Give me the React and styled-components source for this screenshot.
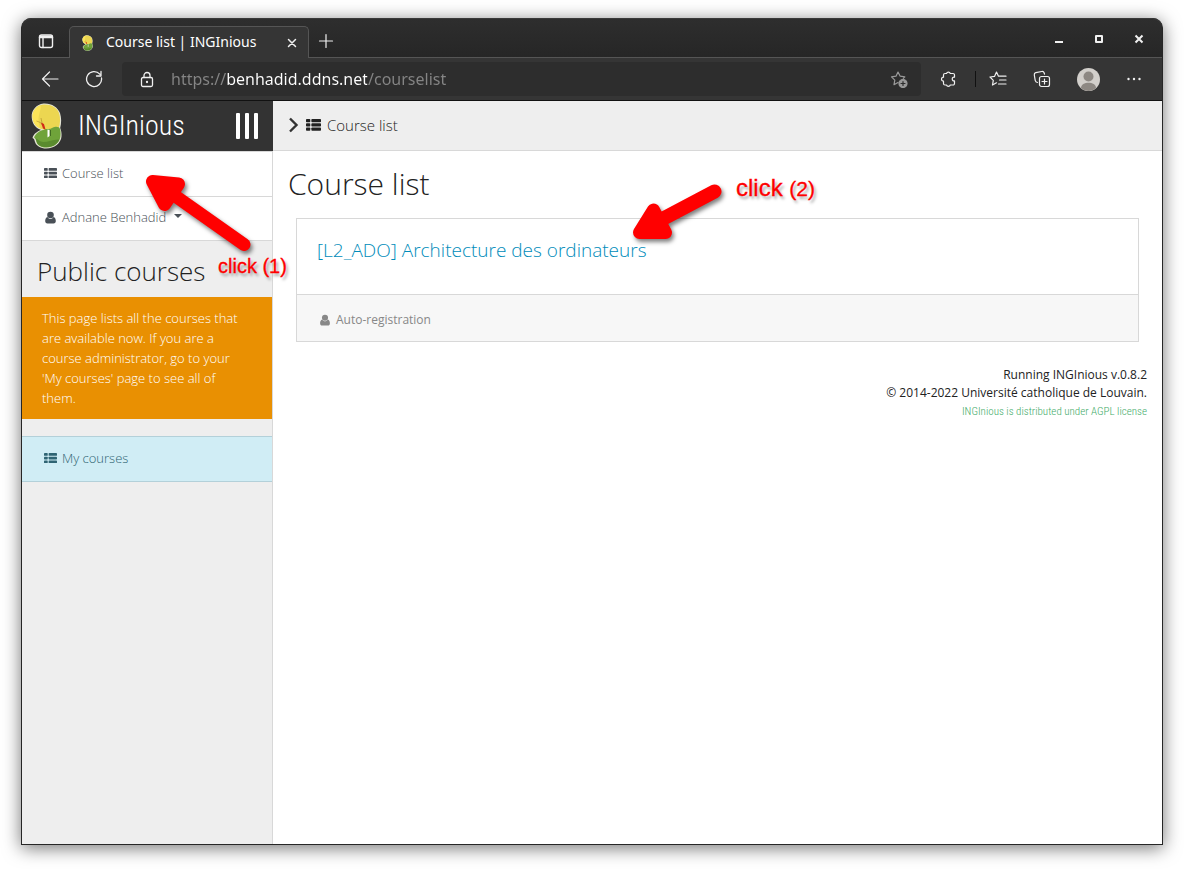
import React from 'react';
import styled, { createGlobalStyle } from 'styled-components';

const GlobalStyle = createGlobalStyle`
  * { box-sizing: border-box; }
  body { margin: 0; background: #fff; font-family: "Open Sans", sans-serif; font-size: 13px; font-weight: 300; color: #222; }
  button, input { font: inherit; color: inherit; border: 0; padding: 0; background: none; }
  a { text-decoration: none; color: inherit; }
  svg { display: block; flex: none; }
`;

const Desktop = styled.div`
  min-height: 100vh;
  padding: 18px 21px 24px;
  display: flex;
`;

const BrowserWindow = styled.div`
  position: relative;
  flex: 1;
  display: flex;
  flex-direction: column;
  border: 1px solid #262626;
  border-top: 0;
  border-radius: 10px 10px 0 0;
  background: #262626;
  box-shadow: 0 3px 18px rgba(0, 0, 0, 0.55);
`;

const TitleBar = styled.div`
  height: 40px;
  display: flex;
  align-items: flex-end;
  border-top: 1px solid #3a3a3a;
  border-bottom: 1px solid #555;
  border-radius: 10px 10px 0 0;
  background: linear-gradient(#2e2e2e, #262626);
  color: #fff;
`;

const BarButton = styled.button`
  width: ${(p) => p.$w || 44}px;
  height: ${(p) => p.$h || 32}px;
  flex: none;
  display: flex;
  align-items: center;
  justify-content: center;
  color: ${(p) => p.$color || '#f0f0f0'};
`;

const Tab = styled.div`
  width: 240px;
  height: 32px;
  margin-bottom: -1px;
  padding: 0 8px 0 11px;
  display: flex;
  align-items: center;
  gap: 12px;
  background: #353535;
  border: 1px solid #555;
  border-bottom: 0;
  border-radius: 5px 5px 0 0;
  font: 400 14px/20px "Noto Sans", sans-serif;
`;

const TabTitle = styled.span`
  flex: 1;
  padding-bottom: 2px;
  white-space: nowrap;
`;

const WindowControls = styled.div`
  margin-left: auto;
  padding-right: 3px;
  display: flex;
`;

const Toolbar = styled.div`
  height: 43px;
  padding: 0 6px;
  display: flex;
  align-items: center;
  background: #353535;
  border-bottom: 1px solid #111;
`;

const AddressBar = styled.div`
  flex: 1;
  height: 34px;
  margin-left: 6px;
  display: flex;
  align-items: center;
  background: #2d2d2d;
  border-radius: 4px;
`;

const Address = styled.input`
  flex: 1;
  min-width: 0;
  height: 24px;
  outline: 0;
  font: 400 16px/24px "Noto Sans", sans-serif;
  background: linear-gradient(90deg, #858585 55px, #fff 55px, #fff 196px, #858585 196px);
  -webkit-background-clip: text;
  background-clip: text;
  -webkit-text-fill-color: transparent;
`;

const Divider = styled.span`
  width: 1px;
  height: 16px;
  background: #111;
`;

const Page = styled.div`
  flex: 1;
  display: flex;
  background: #fff;
`;

const Sidebar = styled.aside`
  width: 251px;
  flex: none;
  background: #eee;
  border-right: 1px solid #d8d8d8;
`;

const Brand = styled.header`
  height: 50px;
  margin-right: -1px;
  padding: 0 15px 0 8px;
  display: flex;
  align-items: center;
  background: #333;
  color: #fff;
  font: 300 28px/50px "Roboto Condensed", "Liberation Sans Narrow", sans-serif;
`;

const BrandLink = styled.a`
  flex: 1;
  display: flex;
  align-items: center;
  gap: 15px;
`;

const NavItem = styled.a`
  height: 45px;
  padding: 0 22px 2px;
  display: flex;
  align-items: center;
  gap: 5px;
  background: #fff;
  color: #495057;
`;

const NavList = styled.nav`
  height: 90px;
  display: flex;
  flex-direction: column;
  border: solid #d8d8d8;
  border-width: 1px 0;

  ${NavItem} + ${NavItem} {
    border-top: 1px solid #d8d8d8;
  }
`;

const Caret = styled.svg`
  margin-left: 2px;
`;

const SideTitle = styled.h2`
  margin: 0;
  padding: 12px 15px 7px;
  font-size: 26px;
  line-height: 37px;
  font-weight: 300;
`;

const Notice = styled.p`
  margin: 0 0 17px;
  padding: 11px 20px;
  line-height: 20px;
  background: #e99002;
  color: #fff;
`;

const CoursesLink = styled(NavItem)`
  height: 46px;
  border: solid #b3d0d9;
  border-width: 1px 0;
  background: #d0edf5;
  color: #2f6473;
`;

const Main = styled.main`
  flex: 1;
  min-width: 0;
`;

const Breadcrumb = styled.nav`
  height: 50px;
  padding: 0 15px 1px;
  display: flex;
  align-items: center;
  gap: 6px;
  background: #eee;
  border-bottom: 1px solid #d8d8d8;
  font-size: 15px;
`;

const Content = styled.div`
  padding: 11px 15px;
`;

const PageTitle = styled.h1`
  margin: 0 0 13px;
  font-size: 30px;
  line-height: 43px;
  font-weight: 300;
`;

const Card = styled.article`
  margin: 0 8px 24px;
  border: 1px solid #d8d8d8;
`;

const CardTitle = styled.h3`
  margin: 0;
  padding: 19px 20px 32px;
  font-size: 19px;
  line-height: 24px;
  font-weight: 300;
  color: #008cba;
`;

const CardFooter = styled.div`
  height: 47px;
  padding: 3px 22px 0;
  display: flex;
  align-items: center;
  gap: 5px;
  border-top: 1px solid #d8d8d8;
  background: #f7f7f7;
  font-size: 12px;
  font-weight: 400;
  color: #888;
`;

const Credits = styled.footer`
  text-align: right;
  font-size: 12px;
  line-height: 18px;
  font-weight: 400;
`;

const License = styled.a`
  display: block;
  color: #43ac6a;
  font: 300 11px/20px "Roboto Condensed", "Liberation Sans Narrow", sans-serif;
`;

const Marks = styled.svg`
  position: absolute;
  left: 0;
  top: 0;
  pointer-events: none;
  filter: drop-shadow(2px 3px 2px rgba(0, 0, 0, 0.5));
`;

const ClickLabel = styled.span`
  position: absolute;
  left: ${(p) => p.$x}px;
  top: ${(p) => p.$y}px;
  font: 400 ${(p) => p.$size}px/28px "Liberation Sans", sans-serif;
  color: #f00;
  -webkit-text-stroke: 0.3px #f00;
  text-shadow: 2px 3px 3px rgba(0, 0, 0, 0.35);
  white-space: nowrap;
`;

const LabelNumber = styled.span`
  font-size: 21px;
`;

const Line = ({ size = 16, w = 1, children, vb = 16 }) => (
  <svg width={size} height={size} viewBox={`0 0 ${vb} ${vb}`} fill="none" stroke="currentColor" strokeWidth={w} strokeLinecap="round" strokeLinejoin="round" aria-hidden="true">
    {children}
  </svg>
);

const ListIcon = ({ width = 13 }) => (
  <svg width={width} height={width * 11 / 14} viewBox="0 0 14 11" fill="currentColor" aria-hidden="true">
    {[0, 4, 8].map((y) => (
      <g key={y}>
        <rect x="0" y={y} width="4" height="3" rx="0.7" />
        <rect x="5" y={y} width="9" height="3" rx="0.7" />
      </g>
    ))}
  </svg>
);

const UserIcon = ({ size = 13 }) => (
  <svg width={size} height={size} viewBox="0 0 13 13" fill="currentColor" aria-hidden="true">
    <circle cx="6.5" cy="4" r="3.3" />
    <path d="M3.500 6C1.800 6.400 1.200 8.300 1.200 10c0 1.500.8 2.500 2.200 2.500h6.200c1.400 0 2.200-1 2.200-2.500 0-1.700-.6-3.600-2.300-4C8.800 7.200 7.700 7.900 6.500 7.900S4.200 7.200 3.500 6z" />
  </svg>
);

const Logo = ({ width, height }) => (
  <svg width={width} height={height} viewBox="0 0 32 46" aria-hidden="true">
    <path d="M13 .5C6 1.500.8 7 1.200 14c.3 6 3.300 11 9.300 13-4 1.500-7.500 4-8.500 8 2 1 2 2.500 2.500 4 1.200 4 6 6.500 11 6.500C24 45.500 30.500 40 31 33.500c.3-3-.3-6-1.300-8.500C31 20 31 15 29.500 10 27 4 21 0 13 .5z" fill="#e4e4d4" />
    <path d="M14 1.500C7 1.500 1.700 7 2 14c.3 7 5 11.500 11 12.500l5 2 10-3c2-5 2-10.500.5-15.500C26.500 4.500 21 1.500 14 1.500z" fill="#ecd651" />
    <path d="M10 2.500C4.500 4.500 1.700 9 2 14c.3 5.500 3.500 9.500 8 11.500C7 20 8 14 9 10c.5-3 2-5 1-7.500z" fill="#fce458" />
    <path d="M13 27c2-1.500 3.500-1 5-1 3 0 4-2 7-2.200 2.500-.2 4 .7 4.500 2.200.8 3 .8 6.500 0 9.500-2 5-7 9-13.500 9-5 0-9-2-10-6-.5-2-.5-3-2.500-4C5 31 8.500 27.500 13 27z" fill="#6fa33a" />
    <path d="M4 35c4 1 5 4 9 4 5 0 10-3 16-2.500-2 5-7 7.500-13 7.500-5 0-9-1.500-10-5.500-.5-2-.5-2.500-2-3.500z" fill="#5a8b2e" />
    <path d="M6 18c3 1 4.500 1.500 6 4L10.500 15" fill="none" stroke="#a8862c" strokeWidth="0.600" />
    <path d="M10.500 19.500l3 1.500 1.500 5.500-2.500-1z" fill="#d22a18" />
    <path d="M17 26.500l2 .5v6L17 34.500z" fill="#fff" />
    <path d="M20 27v6" stroke="#416b22" strokeWidth="1" />
  </svg>
);

export default function App() {
  return (
    <>
      <GlobalStyle />
      <Desktop>
        <BrowserWindow>
          <TitleBar>
            <BarButton $w={47} aria-label="Tab actions">
              <Line w={1.4}>
                <rect x="1.500" y="2" width="13" height="12.500" rx="2" />
                <path d="M1.500 4.500h13M5 5v9.500M2 3.200h12" />
              </Line>
            </BarButton>
            <Tab>
              <Logo width={13} height={16} />
              <TabTitle>Course list | INGInious</TabTitle>
              <BarButton $w={16} $h={24} aria-label="Close tab">
                <Line size={10} vb={10} w={1.5}><path d="M1.500 1.500l7 7M8.500 1.500l-7 7" /></Line>
              </BarButton>
            </Tab>
            <BarButton $w={34} aria-label="New tab">
              <Line w={1.2}><path d="M8 1.500v13M1.500 8h13" /></Line>
            </BarButton>
            <WindowControls>
              <BarButton $w={40} $h={36} aria-label="Minimize">
                <Line size={10} vb={10} w={2}><path strokeLinecap="butt" d="M1 8h8" /></Line>
              </BarButton>
              <BarButton $w={40} $h={36} aria-label="Maximize">
                <Line size={10} vb={10} w={2}><rect x="2" y="2" width="6" height="6" /></Line>
              </BarButton>
              <BarButton $w={40} $h={36} aria-label="Close window">
                <Line size={10} vb={10} w={2}><path strokeLinecap="butt" d="M1.500 1.500l7 7M8.500 1.500l-7 7" /></Line>
              </BarButton>
            </WindowControls>
          </TitleBar>

          <Toolbar>
            <BarButton aria-label="Back">
              <Line size={18} vb={18} w={1.2}><path d="M17 9H1.500M8.500 2l-7 7 7 7" /></Line>
            </BarButton>
            <BarButton aria-label="Refresh">
              <Line size={18} vb={18} w={1.3}><path d="M16.500 8A7.500 7.500 0 1 1 14.800 4.200M16 1.500V6h-4.500" /></Line>
            </BarButton>
            <AddressBar>
              <BarButton $w={49} aria-label="Site information">
                <Line size={17} vb={17} w={1.300}>
                  <rect x="3.500" y="6.500" width="11" height="9" rx="1.500" />
                  <path d="M6 6.500V4.500a3 3 0 0 1 6 0v2" />
                  <circle cx="9" cy="11" r="0.500" fill="currentColor" />
                </Line>
              </BarButton>
              <Address aria-label="Address" defaultValue="https://benhadid.ddns.net/courselist" />
              <BarButton aria-label="Add to favorites" $color="#9a9a9a">
                <Line size={18} vb={18} w={1.200}>
                  <path d="M8 12.500L4 14.700l.8-4.600L1.500 6.800l4.500-.6L8 2l2.200 4.200 4.600.6-1.500 1.500" />
                  <circle cx="13" cy="13.500" r="4" fill="currentColor" />
                  <path d="M13 11.500v4M11 13.500h4" stroke="#2d2d2d" />
                </Line>
              </BarButton>
            </AddressBar>
            <BarButton $w={54} aria-label="Extensions">
              <Line size={18} vb={18} w={1.200}>
                <path d="M6 3.500h1.500a2 2 0 0 1 3.800 0H14A1.500 1.500 0 0 1 15.500 5v2.200c-3-.8-3 4.400 0 3.600V13.500A1.500 1.500 0 0 1 14 15h-2.700a2 2 0 0 1-3.800 0H6a1.500 1.500 0 0 1-1.500-1.500V11.200a2 2 0 0 1 0-4V5A1.500 1.500 0 0 1 6 3.500z" />
              </Line>
            </BarButton>
            <Divider />
            <BarButton aria-label="Favorites">
              <Line size={18} vb={18} w={1.200}>
                <path d="M7.500 12.800L3.500 15l.8-4.700L1 7l4.500-.6L7.500 2l2 4.200H17M10.500 10H17M9.500 14H17" />
              </Line>
            </BarButton>
            <BarButton aria-label="Collections">
              <Line size={18} vb={18} w={1.200}>
                <rect x="6.500" y="6.500" width="10" height="10" rx="2" />
                <path d="M11.500 9v5M9 11.500h5M4.500 12.500c-1.500-.3-2-1-2.300-2.200L1.300 5c-.2-1.300.4-2 1.500-2.300l6-1.200c1.300-.2 2 .3 2.400 1.500l.3 1.200" />
              </Line>
            </BarButton>
            <BarButton $w={48} aria-label="Profile">
              <svg width="23" height="23" viewBox="0 0 23 23" aria-hidden="true">
                <circle cx="11.500" cy="11.500" r="11.500" fill="#d2cfcb" />
                <circle cx="11.500" cy="8.500" r="5" fill="#8d8883" />
                <path d="M4 20c0-7 15-7 15 0-4 4-11 4-15 0z" fill="#8d8883" />
              </svg>
            </BarButton>
            <BarButton aria-label="Settings and more">
              <Line w={0}>
                {[2.5, 8, 13.500].map((x) => <circle key={x} cx={x} cy="8" r="1.200" fill="currentColor" />)}
              </Line>
            </BarButton>
          </Toolbar>

          <Page>
            <Sidebar>
              <Brand>
                <BrandLink href="#home"><Logo width={33} height={46} /><span>INGInious</span></BrandLink>
                <BarButton $w={22} $h={36} $color="#fff" aria-label="Toggle menu">
                  <svg width="22" height="26" viewBox="0 0 22 26" fill="currentColor" aria-hidden="true">
                    {[0, 9, 18].map((x) => <rect key={x} x={x} width="4" height="26" rx="1" />)}
                  </svg>
                </BarButton>
              </Brand>
              <NavList>
                <NavItem href="#courselist"><ListIcon /><span>Course list</span></NavItem>
                <NavItem href="#account">
                  <UserIcon /><span>Adnane Benhadid</span>
                  <Caret width="10" height="10" viewBox="0 0 10 10" aria-hidden="true"><path d="M1 2h8L5 6z" fill="currentColor" /></Caret>
                </NavItem>
              </NavList>
              <SideTitle>Public courses</SideTitle>
              <Notice>
                This page lists all the courses that are available now. If you are a course administrator, go to your 'My courses' page to see all of them.
              </Notice>
              <CoursesLink href="#mycourses"><ListIcon /><span>My courses</span></CoursesLink>
            </Sidebar>

            <Main>
              <Breadcrumb aria-label="Breadcrumb">
                <svg width="12" height="16" viewBox="0 0 12 16" fill="none" stroke="#333" strokeWidth="2.4" aria-hidden="true"><path d="M2 1.500l6.500 6.500L2 14.500" /></svg>
                <ListIcon width={15} />
                <span>Course list</span>
              </Breadcrumb>
              <Content>
                <PageTitle>Course list</PageTitle>
                <Card>
                  <CardTitle><a href="#L2_ADO">[L2_ADO] Architecture des ordinateurs</a></CardTitle>
                  <CardFooter><UserIcon size={12} /><span>Auto-registration</span></CardFooter>
                </Card>
                <Credits>
                  <div>Running INGInious v.0.8.2</div>
                  <div>© 2014-2022 Université catholique de Louvain.</div>
                  <License href="#license">INGInious is distributed under AGPL license</License>
                </Credits>
              </Content>
            </Main>
          </Page>

          <Marks width="720" height="260" viewBox="22 18 720 260" stroke="#f00" fill="#f00" strokeLinejoin="round" strokeLinecap="round" aria-hidden="true">
            <path d="M152.500 181.500L178.500 184L164.500 204.500z" strokeWidth="13" />
            <path d="M166 189.500L244 244.500" strokeWidth="13" />
            <path d="M639.500 232.500L653.500 210L665.500 232.500z" strokeWidth="13" />
            <path d="M653 224L714.500 191.500" strokeWidth="14" />
          </Marks>
          <ClickLabel $x={196} $y={234} $size={20}>click (1)</ClickLabel>
          <ClickLabel $x={714} $y={156} $size={24}>click <LabelNumber>(2)</LabelNumber></ClickLabel>
        </BrowserWindow>
      </Desktop>
    </>
  );
}
